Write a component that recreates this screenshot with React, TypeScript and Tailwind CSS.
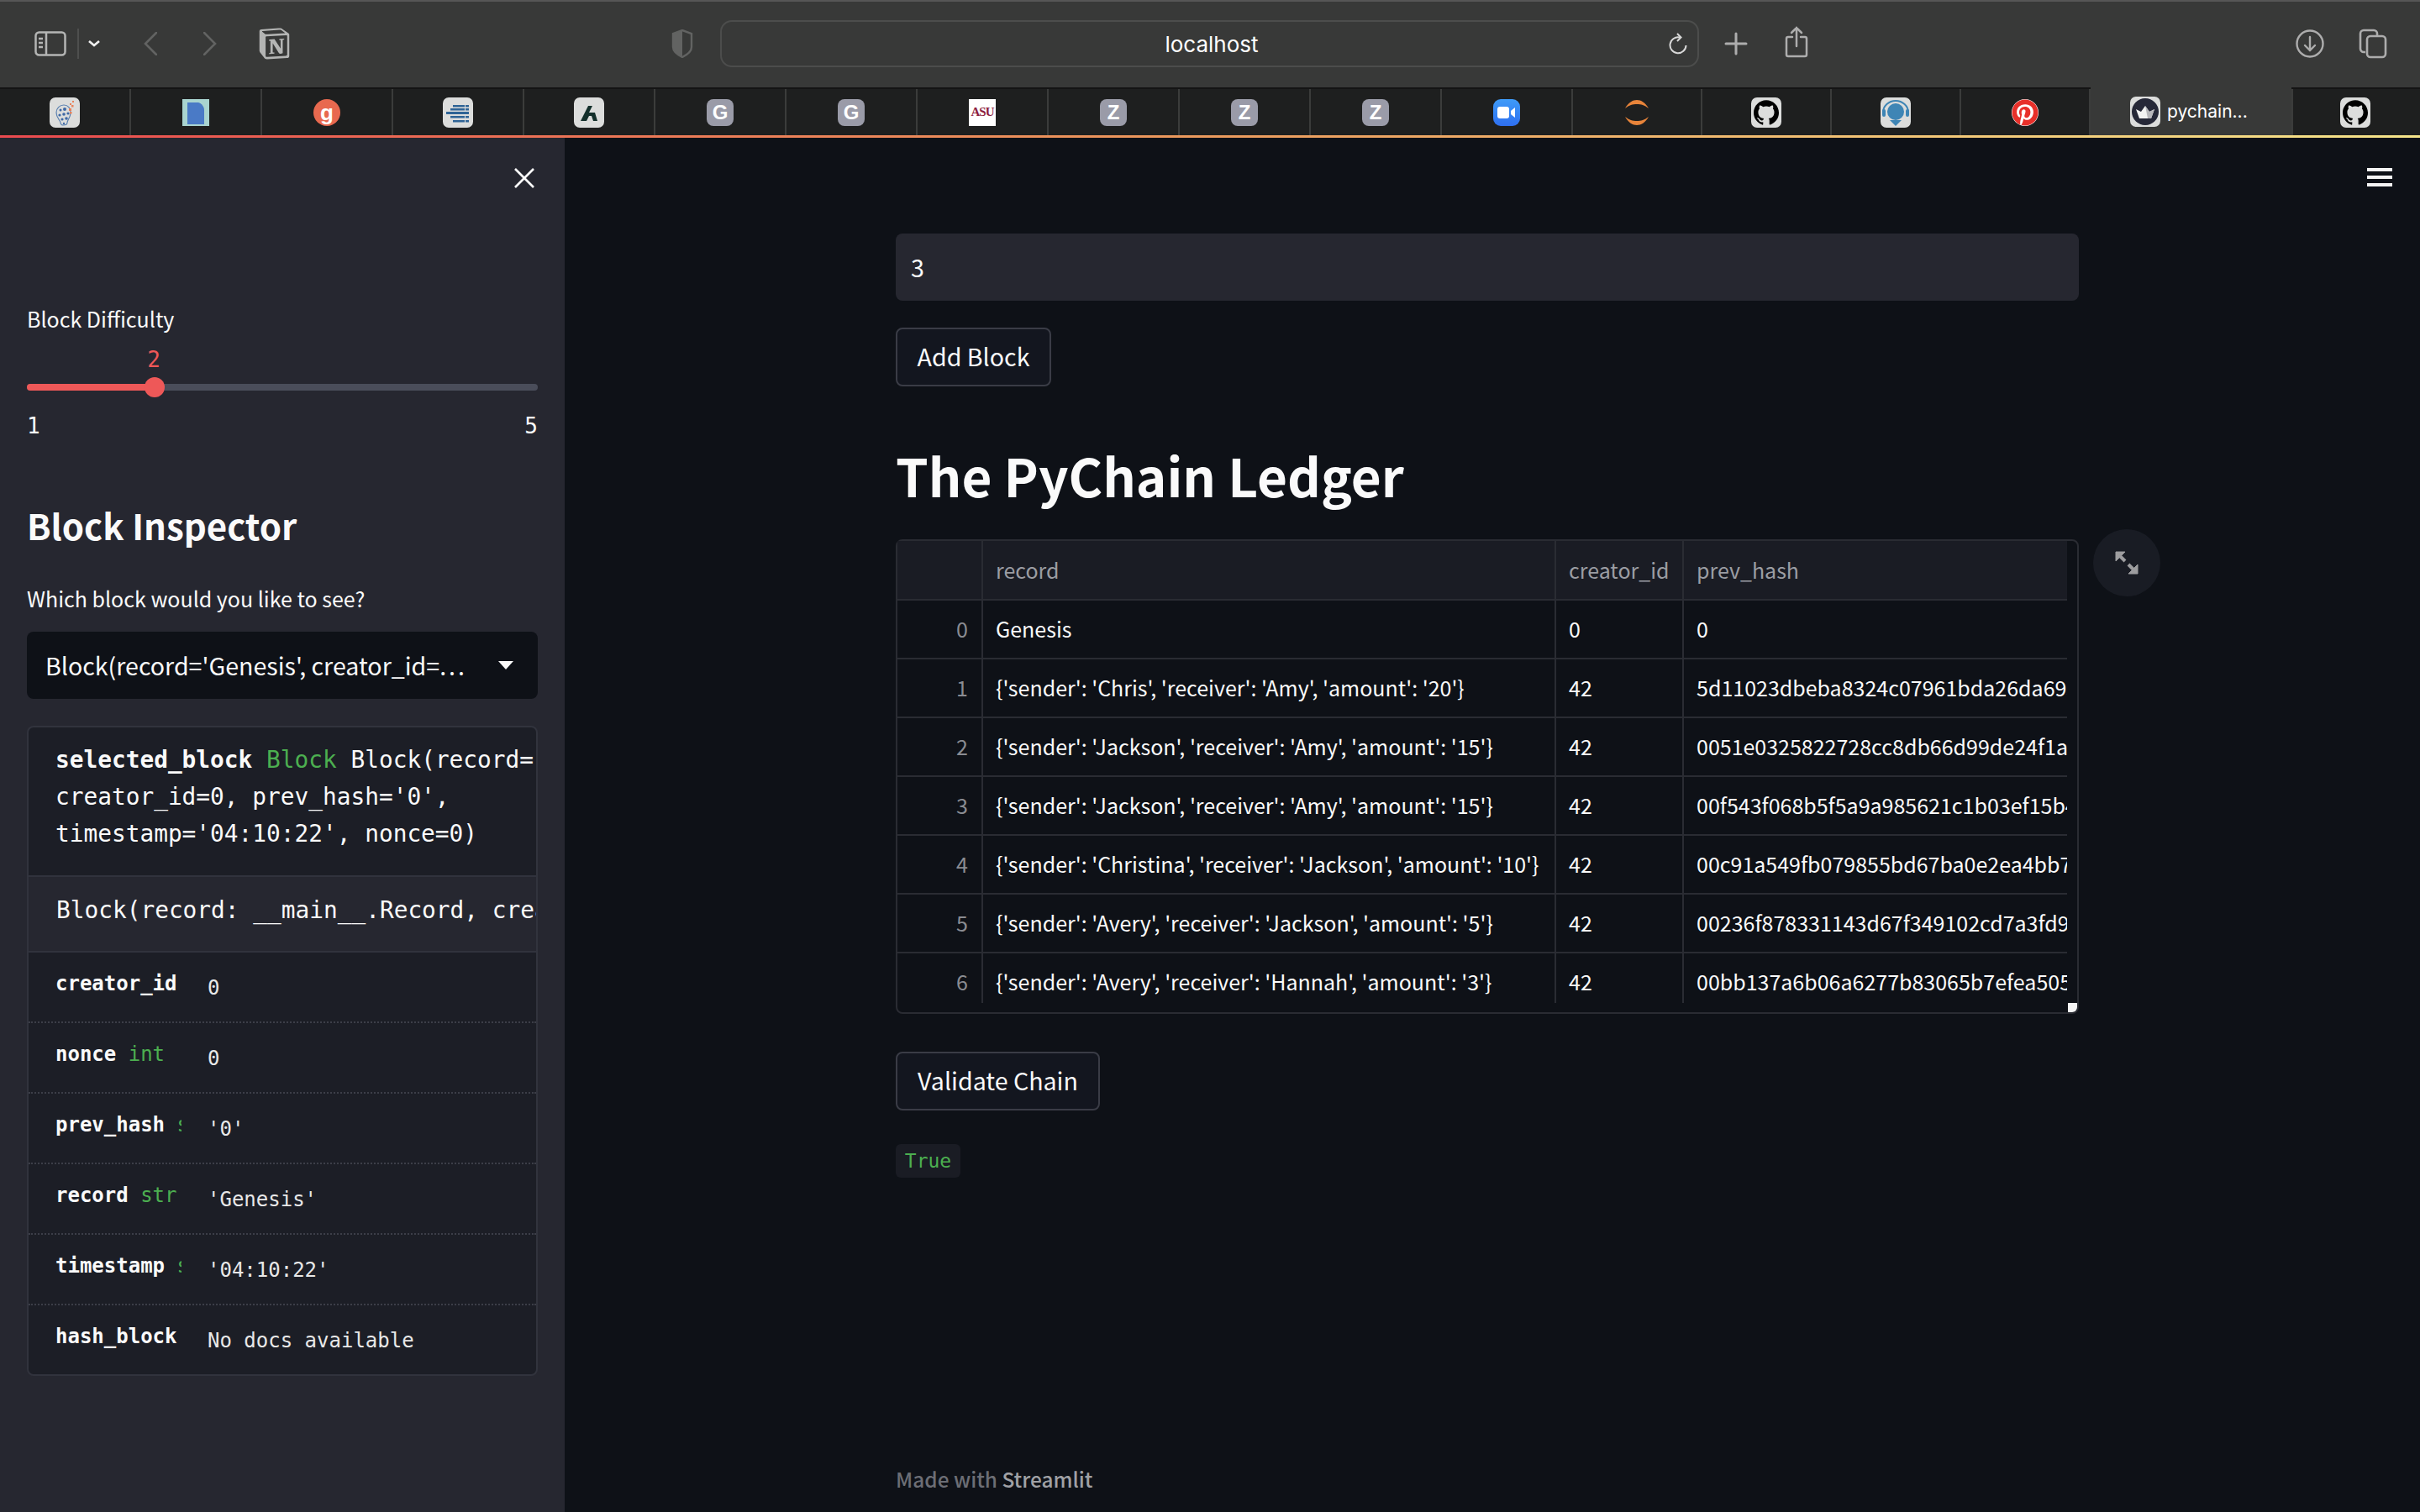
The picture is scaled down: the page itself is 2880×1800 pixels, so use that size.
import type { ReactNode } from "react";
import { FaPinterest } from "react-icons/fa";
import { SiGithub, SiNotion } from "react-icons/si";

const rows = [
  ["0", "Genesis", "0", "0"],
  ["1", "{'sender': 'Chris', 'receiver': 'Amy', 'amount': '20'}", "42", "5d11023dbeba8324c07961bda26da693"],
  ["2", "{'sender': 'Jackson', 'receiver': 'Amy', 'amount': '15'}", "42", "0051e0325822728cc8db66d99de24f1a7"],
  ["3", "{'sender': 'Jackson', 'receiver': 'Amy', 'amount': '15'}", "42", "00f543f068b5f5a9a985621c1b03ef15b4"],
  ["4", "{'sender': 'Christina', 'receiver': 'Jackson', 'amount': '10'}", "42", "00c91a549fb079855bd67ba0e2ea4bb73"],
  ["5", "{'sender': 'Avery', 'receiver': 'Jackson', 'amount': '5'}", "42", "00236f878331143d67f349102cd7a3fd92"],
  ["6", "{'sender': 'Avery', 'receiver': 'Hannah', 'amount': '3'}", "42", "00bb137a6b06a6277b83065b7efea5052"],
];

const fields = [
  { name: "creator_id", type: "", value: "0" },
  { name: "nonce", type: "int", value: "0" },
  { name: "prev_hash", type: "str", value: "'0'" },
  { name: "record", type: "str", value: "'Genesis'" },
  { name: "timestamp", type: "str", value: "'04:10:22'" },
  { name: "hash_block", type: "", value: "No docs available" },
];

function LightTile({ children }: { children: ReactNode }) {
  return <div className="flex h-9 w-9 items-center justify-center overflow-hidden rounded-[7px] bg-[#dcdddc]">{children}</div>;
}

function LetterTile({ letter }: { letter: string }) {
  return (
    <div className="flex h-8 w-8 items-center justify-center rounded-[8px] bg-[#9a9ba8] font-['Liberation_Sans',sans-serif] text-[24px] leading-8 font-bold text-white">
      {letter}
    </div>
  );
}

function GithubIcon() {
  return (
    <LightTile>
      <SiGithub className="h-[30px] w-[30px] text-black" />
    </LightTile>
  );
}

const favicons: ReactNode[] = [
  <LightTile>
    <svg viewBox="0 0 36 36" className="h-9 w-9">
      <path d="M16 33c-1 0-3-1-3-3 0-3-5-5-5-12 0-5 4-9 9-9" fill="none" stroke="#5a80b0" strokeWidth="1.2" />
      <path d="M17 9c5 0 8 4 8 9 0 6-4 9-4 12 0 2-2 3-5 3" fill="none" stroke="#5a80b0" strokeWidth="1.2" />
      <g fill="#3f69a6">
        <circle cx="13" cy="15" r="1.5" /><circle cx="18" cy="14" r="2" /><circle cx="22" cy="19" r="1.6" />
        <circle cx="12" cy="21" r="1.6" /><circle cx="17" cy="20" r="1.8" /><circle cx="15" cy="26" r="1.6" />
        <circle cx="20" cy="25" r="1.8" /><circle cx="17" cy="31" r="1.2" />
      </g>
      <g fill="#e8825a">
        <rect x="23" y="13" width="3" height="3" /><rect x="26" y="9" width="2.5" height="2.5" />
        <rect x="24" y="17" width="2.5" height="2.5" /><rect x="27" y="4" width="2" height="2" /><rect x="24" y="7" width="2" height="2" />
      </g>
    </svg>
  </LightTile>,
  <div className="flex h-8 w-8 items-end justify-center bg-[#a9d4d0] pb-[2px]">
    <svg viewBox="0 0 20 26" className="h-[26px] w-5">
      <path d="M0 0h13c4 1 7 5 7 9v17H0z" fill="#4a7ac6" />
    </svg>
  </div>,
  <div className="flex h-8 w-8 items-center justify-center rounded-full bg-[#e8694f] font-['Liberation_Sans',sans-serif] text-[26px] leading-7 font-bold text-white">g</div>,
  <LightTile>
    <svg viewBox="0 0 36 36" className="h-9 w-9" fill="#2f6496">
      <rect x="12" y="9" width="14" height="2.5" /><rect x="27" y="9" width="4" height="2.5" />
      <rect x="9" y="13" width="17" height="2.5" /><rect x="27" y="13" width="4" height="2.5" />
      <rect x="4" y="17" width="27" height="3" />
      <rect x="9" y="22" width="17" height="2.5" /><rect x="27" y="22" width="4" height="2.5" />
      <rect x="12" y="27" width="14" height="2.5" /><rect x="27" y="27" width="4" height="2.5" />
    </svg>
  </LightTile>,
  <LightTile>
    <svg viewBox="0 0 36 36" className="h-9 w-9">
      <path d="M8 28 17 10h5l-4 8 7 0 3 10h-5l-2-6-3 0-3 6z" fill="#14302c" />
    </svg>
  </LightTile>,
  <LetterTile letter="G" />,
  <LetterTile letter="G" />,
  <div className="flex h-8 w-8 items-center justify-center bg-white font-['Liberation_Serif',serif] text-[15px] leading-none font-bold tracking-[-1px] text-[#8c1d40]">
    ASU
  </div>,
  <LetterTile letter="Z" />,
  <LetterTile letter="Z" />,
  <LetterTile letter="Z" />,
  <div className="flex h-8 w-8 items-center justify-center rounded-[9px] bg-linear-to-b from-[#3f9bf8] to-[#2f6ff0]">
    <svg viewBox="0 0 24 16" className="h-[16px] w-6">
      <rect x="1" y="1" width="14" height="14" rx="3" fill="#fff" />
      <path d="M17 6l5-4v12l-5-4z" fill="#fff" />
    </svg>
  </div>,
  <svg viewBox="0 0 32 32" className="h-8 w-8">
    <path d="M2 11C6 4 11 1 16 1s10 3 14 10C25 7 21 6 16 6S7 7 2 11z" fill="#e8843a" />
    <path d="M2 21c4 7 9 10 14 10s10-3 14-10c-5 4-9 5-14 5s-9-1-14-5z" fill="#e8843a" />
  </svg>,
  <GithubIcon />,
  <LightTile>
    <svg viewBox="0 0 36 36" className="h-9 w-9">
      <path d="M3 18a15 14 0 0 1 30 0" fill="none" stroke="#3e85b5" strokeWidth="2" />
      <circle cx="18" cy="17" r="10" fill="#3e85b5" />
      <rect x="2" y="14" width="4" height="9" rx="2" fill="#3e85b5" />
      <rect x="30" y="14" width="4" height="9" rx="2" fill="#3e85b5" />
      <path d="M11 27h14l-7 7z" fill="#3e85b5" />
    </svg>
  </LightTile>,
  <div className="flex h-8 w-8 items-center justify-center rounded-full bg-white">
    <FaPinterest className="h-8 w-8 text-[#e8302a]" />
  </div>,
];

function AppButton({ label, width }: { label: string; width: string }) {
  return (
    <button className={`h-[70px] rounded-[8px] border-2 border-[#3a3c46] bg-[#13161f] pb-[2px] text-[28.6px] leading-[40px] text-[#fafafa] ${width}`}>
      {label}
    </button>
  );
}

function Toolbar() {
  return (
    <div className="flex h-[104px] items-center border-t-2 border-[#565656] bg-[#383938] pb-[3px] pl-[41px]">
      <svg viewBox="0 0 38 30" className="h-[30px] w-[38px]" fill="none" stroke="#b4b5b4" strokeWidth="2.5">
        <rect x="1.5" y="1.5" width="35" height="27" rx="4" />
        <path d="M14 2v26M5 9h5M5 14h5M5 19h5" />
      </svg>
      <div className="ml-[13px] h-9 w-[2px] bg-[#4e4f4e]" />
      <svg viewBox="0 0 14 8" className="ml-[11px] h-2 w-[14px]" fill="none" stroke="#f0f0f0" strokeWidth="2.6">
        <path d="M1 1l6 5 6-5" />
      </svg>
      <svg viewBox="0 0 16 28" className="ml-[52px] h-7 w-4" fill="none" stroke="#626362" strokeWidth="2.6" strokeLinecap="round">
        <path d="M15 1 2 14l13 13" />
      </svg>
      <svg viewBox="0 0 16 28" className="ml-[55px] h-7 w-4" fill="none" stroke="#626362" strokeWidth="2.6" strokeLinecap="round">
        <path d="M1 1l13 13L1 27" />
      </svg>
      <SiNotion className="ml-[50px] h-[38px] w-[37px] text-[#b4b5b4]" />
      <svg viewBox="0 0 26 34" className="ml-[454px] h-[34px] w-[26px]">
        <path d="M13 1 2 5v16c0 5 5 9 11 12 6-3 11-7 11-12V5z" fill="none" stroke="#626362" strokeWidth="2.4" />
        <path d="M13 1 2 5v16c0 5 5 9 11 12z" fill="#626362" />
      </svg>
      <div className="ml-[32px] mt-[1px] flex h-14 w-[1165px] items-center rounded-[14px] border-2 border-[#4c4d4c] bg-[#383938] pr-[12px]">
        <span className="ml-[523px] mt-[2px] w-[120px] text-center font-['Inter',sans-serif] text-[26px] leading-8 text-white">localhost</span>
        <svg viewBox="0 0 22 26" className="ml-auto h-[26px] w-[22px]" fill="none" stroke="#d8d8d8" strokeWidth="2">
          <path d="M13 5.5A9.5 9.5 0 1 0 20.5 15" />
          <path d="M10 1l4.5 4.5L10 10" />
        </svg>
      </div>
      <svg viewBox="0 0 28 28" className="ml-[30px] h-7 w-7" stroke="#adadad" strokeWidth="3" strokeLinecap="round">
        <path d="M14 2v24M2 14h24" />
      </svg>
      <svg viewBox="0 0 28 38" className="mb-[3px] ml-[44px] h-[38px] w-7" fill="none" stroke="#adadad" strokeWidth="2.5" strokeLinecap="round">
        <path d="M9 13H4a2 2 0 0 0-2 2v19a2 2 0 0 0 2 2h20a2 2 0 0 0 2-2V15a2 2 0 0 0-2-2h-5" />
        <path d="M14 24V2M8 8l6-6 6 6" />
      </svg>
      <svg viewBox="0 0 34 34" className="ml-[580px] h-[34px] w-[34px]" fill="none" stroke="#adadad" strokeWidth="2.4" strokeLinecap="round">
        <circle cx="17" cy="17" r="15.5" />
        <path d="M17 9v16M11 19l6 6 6-6" />
      </svg>
      <svg viewBox="0 0 34 36" className="ml-[41px] h-9 w-[34px]" fill="none" stroke="#adadad" strokeWidth="2.6">
        <path d="M8 28H6a4 4 0 0 1-4-4V6a4 4 0 0 1 4-4h12a4 4 0 0 1 4 4v2" />
        <rect x="10" y="9" width="22" height="25" rx="4" />
      </svg>
    </div>
  );
}

function TabStrip() {
  return (
    <div className="flex h-[57px] border-t-2 border-[#141414] bg-[#1e1f1f]">
      {favicons.map((icon, i) => (
        <div key={i} className={`flex h-[55px] items-center justify-center border-r-2 border-[#3b3c3b] ${i < 12 ? "w-[156px]" : "w-[154px]"}`}>
          {icon}
        </div>
      ))}
      <div className="-mt-[2px] flex h-[57px] w-[239px] items-center bg-[#383938] pl-[47px]">
        <div className="flex h-9 w-9 items-center justify-center rounded-[7px] bg-[#dcdddc]">
          <svg viewBox="0 0 32 32" className="h-8 w-8">
            <circle cx="16" cy="16" r="16" fill="#262838" />
            <path d="M5 13l6 3 5-7 5 7 6-3-4 11H9z" fill="#f2f2f2" />
            <path d="M16 9l5 7 6-3-4 11h-4z" fill="#b8b8bc" />
          </svg>
        </div>
        <span className="ml-2 font-['Inter',sans-serif] text-[21px] leading-8 text-white">pychain...</span>
      </div>
      <div className="flex h-[55px] flex-1 items-center justify-center border-l-2 border-[#3b3c3b] pr-[4px]">
        <GithubIcon />
      </div>
    </div>
  );
}

function Sidebar() {
  return (
    <aside className="flex h-full w-[672px] shrink-0 flex-col bg-[#262730] pl-[32px] pr-[32px] pt-[36px] text-[#fafafa]">
      <div className="flex h-6 justify-end pr-1">
        <svg viewBox="0 0 24 24" className="h-6 w-6" fill="none" stroke="#ffffff" strokeWidth="2.6">
          <path d="M1 1l22 22M23 1 1 23" />
        </svg>
      </div>

      <label className="mt-[135px] text-[25px] leading-10">Block Difficulty</label>
      <div className="mt-[13px] ml-[143px] w-4 text-center font-['DejaVu_Sans_Mono',monospace] text-[26px] leading-8 text-[#ee5858]">2</div>
      <div className="relative mt-[13px] h-2 w-full rounded-full bg-[#4a4d5a]">
        <div className="h-2 w-[152px] rounded-l-full bg-[#ee5858]" />
        <div className="absolute -top-2 left-[140px] h-6 w-6 rounded-full bg-[#ee5858]" />
      </div>
      <div className="mt-[26px] flex justify-between font-['DejaVu_Sans_Mono',monospace] text-[26px] leading-8">
        <span>1</span>
        <span>5</span>
      </div>

      <h2 className="mt-[72px] text-[42px] leading-[60px] font-semibold">Block Inspector</h2>
      <label className="mt-[37px] text-[25px] leading-10">Which block would you like to see?</label>
      <div className="mt-5 flex h-20 items-center justify-between rounded-[8px] bg-[#0e1117] pl-[22px] pr-[29px]">
        <span className="whitespace-nowrap text-[28.6px] leading-10">
          Block(record='Genesis', creator_id=<span className="tracking-[3px]">...</span>
        </span>
        <svg viewBox="0 0 18 10" className="h-[10px] w-[18px]" fill="#fafafa">
          <path d="M0 0h18L9 10z" />
        </svg>
      </div>

      <div className="mt-8 overflow-hidden rounded-[8px] border-2 border-[#31333d] bg-[#1c1e26] font-['DejaVu_Sans_Mono',monospace]">
        <div className="h-[178px] overflow-hidden whitespace-nowrap border-b-2 border-[#31333d] pl-[32px] pt-[17px] text-[27.8px] leading-[44px]">
          <div>
            <span className="font-bold">selected_block</span> <span className="text-[#4caf50]">Block</span> Block(record='Genesis',
          </div>
          <div>creator_id=0, prev_hash='0',</div>
          <div>timestamp='04:10:22', nonce=0)</div>
        </div>
        <div className="h-[90px] overflow-hidden whitespace-nowrap border-b-2 border-[#31333d] bg-[#262730] pl-[33px] pt-[18px] text-[27.8px] leading-[44px]">
          Block(record: __main__.Record, creator_id: int, prev_hash: str)
        </div>
        {fields.map((field, i) => (
          <div key={field.name} className={`flex text-[24px] ${i < fields.length - 1 ? "h-[84px] border-b-2 border-dotted border-[#3c3e48]" : "h-[82px]"}`}>
            <div className="ml-[32px] mt-[21px] h-8 w-[150px] shrink-0 overflow-hidden whitespace-nowrap leading-8">
              <span className="font-bold">{field.name}</span> <span className="text-[#4caf50]">{field.type}</span>
            </div>
            <div className="ml-[31px] mt-[26px] leading-8 text-[#e8e8e8]">{field.value}</div>
          </div>
        ))}
      </div>
    </aside>
  );
}

function LedgerTable() {
  return (
    <div className="relative mt-[30px] h-[565px] rounded-[8px] border-2 border-[#2a2c33] text-[25px]">
      <div className="grid w-[1392px] grid-cols-[102px_682px_152px_456px] overflow-hidden">
        {["", "record", "creator_id", "prev_hash"].map((head, i) => (
          <div
            key={i}
            className={`h-[71px] overflow-hidden whitespace-nowrap border-b-2 border-[#2a2c33] bg-[#1a1c24] pl-[15px] leading-[68px] text-[#9b9da3] ${i < 3 ? "border-r-2" : ""}`}
          >
            {head}
          </div>
        ))}
        {rows.map((row, r) =>
          row.map((cell, c) => (
            <div
              key={`${r}-${c}`}
              className={`overflow-hidden whitespace-nowrap border-[#2a2c33] leading-[66px] ${r < 6 ? "h-[70px] border-b-2" : "h-[59px]"} ${c < 3 ? "border-r-2" : ""} ${c === 0 ? "pr-4 text-right text-[#8a8c92]" : "pl-[15px] text-[#fafafa]"}`}
            >
              {cell}
            </div>
          )),
        )}
      </div>
      {/* resize handle */}
      <div className="absolute bottom-0 right-0 h-[11px] w-[11px] rounded-br-[6px] bg-[#f5f5f5]" />
      {/* fullscreen button sits beside the table */}
      <button className="absolute -top-[14px] left-[calc(100%+19px)] flex h-20 w-20 items-center justify-center rounded-full bg-[#191c24]">
        <svg viewBox="0 0 28 28" className="h-7 w-7" fill="#9d9d9f" stroke="#9d9d9f">
          <path d="M1 1h11L1 12z" strokeWidth="1" />
          <path d="M27 27H16l11-11z" strokeWidth="1" />
          <path d="M6 6l6 6M16 16l6 6" strokeWidth="4" fill="none" />
        </svg>
      </button>
    </div>
  );
}

export default function App() {
  return (
    <div className="flex h-[1800px] w-[2880px] flex-col overflow-hidden bg-[#0e1117] font-['Noto_Sans_CJK_SC','Noto_Sans',sans-serif]">
      <Toolbar />
      <TabStrip />
      <div className="h-[3px] shrink-0 bg-linear-to-r from-[#ea4a4f] via-[#eb9a5d] to-[#f6e58a]" />
      <div className="flex min-h-0 flex-1">
        <Sidebar />
        <main className="relative flex flex-1 flex-col pb-[19px] pl-[394px] pt-[114px] text-[#fafafa]">
          <div className="absolute right-[33px] top-[36px] flex w-[30px] flex-col gap-[5px]">
            <div className="h-1 bg-[#f4f4f4]" />
            <div className="h-1 bg-[#f4f4f4]" />
            <div className="h-1 bg-[#f4f4f4]" />
          </div>

          <div className="w-[1408px]">
            <div className="flex h-20 items-center rounded-[8px] bg-[#262730] pl-[18px] text-[28.6px] leading-10">3</div>
            <div className="mt-8">
              <AppButton label="Add Block" width="w-[185px]" />
            </div>
            <h1 className="mt-[60px] text-[62px] leading-[90px] font-bold">The PyChain Ledger</h1>
            <div className="h-[2px]" />
            <LedgerTable />
            <div className="mt-[45px]">
              <AppButton label="Validate Chain" width="w-[243px]" />
            </div>
            <div className="mt-[40px] flex h-10 w-[77px] items-center justify-center rounded-[6px] bg-[#1a1c24] font-['DejaVu_Sans_Mono',monospace] text-[23px] leading-10 text-[#4caf50]">
              True
            </div>
          </div>

          <div className="mt-auto text-[24.4px] leading-10 font-medium text-[#6c6e75]">
            Made with <span className="text-[#a0a1a5]">Streamlit</span>
          </div>
        </main>
      </div>
    </div>
  );
}
